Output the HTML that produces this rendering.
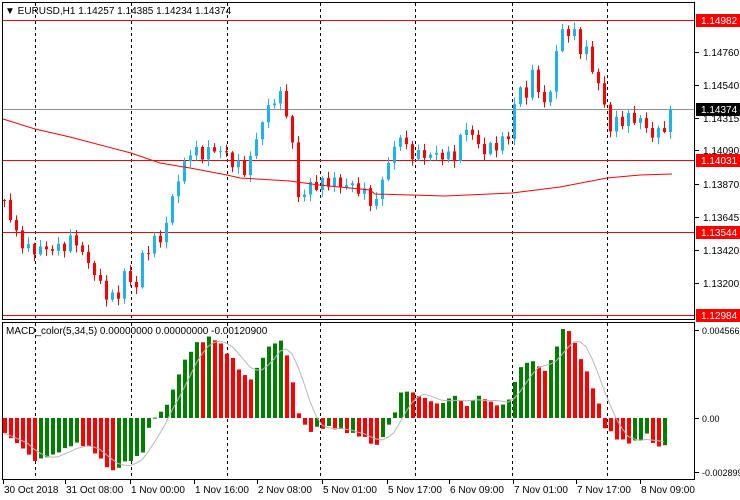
<!DOCTYPE html>
<html><head><meta charset="utf-8"><style>
html,body{margin:0;padding:0;background:#fff;width:740px;height:500px;overflow:hidden}
svg{display:block}
text{font-family:"Liberation Sans",Tahoma,sans-serif;font-size:10px;fill:#000}
</style></head><body>
<svg id="s" width="740" height="500" xmlns="http://www.w3.org/2000/svg">
<rect x="0" y="0" width="740" height="500" fill="#fff"/>
<g id="g"></g>
<rect x="2.5" y="2.5" width="692" height="317" fill="none" stroke="#000"/>
<rect x="2.5" y="322.5" width="692" height="157" fill="none" stroke="#000"/>
<text x="5" y="14" style="font-size:10px">▼ EURUSD,H1  1.14257 1.14385 1.14234 1.14374</text>
<text x="6" y="334" style="font-size:10px">MACD_color(5,34,5) 0.00000000 0.00000000 -0.00120900</text>
</svg>
<script>
var g=document.getElementById('g'),h='';
function L(x1,y1,x2,y2,c,extra){h+='<line x1="'+x1+'" y1="'+y1+'" x2="'+x2+'" y2="'+y2+'" stroke="'+c+'" '+(extra||'')+'/>';}
function R(x,y,w,hh,c){h+='<rect x="'+x+'" y="'+y+'" width="'+w+'" height="'+hh+'" fill="'+c+'"/>';}
function T(x,y,t,c,extra){h+='<text x="'+x+'" y="'+y+'" '+(extra||'')+' style="fill:'+c+'">'+t+'</text>';}
var vx=[35,131,227,320,415,512,607];
vx.forEach(function(x){L(x+.5,3,x+.5,319,'#000','stroke-dasharray="3,3"');L(x+.5,323,x+.5,479,'#000','stroke-dasharray="3,3"');});
[20,160,232,315].forEach(function(y){L(3,y+.5,694,y+.5,'#f00');});
L(3,109.5,694,109.5,'#8a949c');
function interp(p,x){for(var k=0;k<p.length-1;k++){if(x>=p[k][0]&&x<=p[k+1][0]){var t=(x-p[k][0])/(p[k+1][0]-p[k][0]);return p[k][1]+t*(p[k+1][1]-p[k][1]);}}return x<p[0][0]?p[0][1]:p[p.length-1][1];}
var kp=[[4,200],[16,235],[28,250],[60,248],[75,238],[82,255],[90,265],[100,285],[110,300],[120,292],[125,270],[135,292],[140,260],[150,245],[165,233],[170,200],[180,175],[190,150],[200,155],[210,150],[220,150],[235,165],[245,170],[250,160],[258,130],[265,115],[272,100],[278,95],[283,100],[290,125],[296,190],[300,200],[310,185],[320,185],[330,180],[340,185],[350,185],[360,190],[370,200],[378,205],[383,170],[390,160],[400,133],[406,150],[415,155],[445,155],[452,160],[460,140],[465,125],[475,140],[480,150],[488,150],[495,145],[505,140],[512,130],[517,68],[523,110],[530,72],[535,80],[540,90],[545,112],[550,88],[555,58],[560,30],[565,31],[570,33],[575,35],[580,48],[585,50],[590,60],[595,80],[600,88],[605,110],[610,128],[616,122],[622,120],[630,118],[640,120],[645,128],[650,132],[655,138],[660,130],[665,125],[671,109]];
var prev=200;
for(var i=0;i<112;i++){var x=4+6*i;var c=interp(kp,x)+Math.sin(i*2.7)*6;if(i==111)c=109;var o=prev;prev=c;
var hi=Math.min(o,c)-Math.abs(Math.sin(i*1.9))*6-1,lo=Math.max(o,c)+Math.abs(Math.cos(i*1.3))*6+1;
var col=c<o?'#1cb4f0':'#ff0000';L(x+.5,hi,x+.5,lo,col);var t=Math.min(o,c),bh=Math.max(1,Math.abs(o-c));R(x-1,t,3,bh,col);}
var ma=[[3,119],[35,129],[70,137],[131,153],[160,163],[190,168],[227,175],[240,178],[290,181],[319,185],[370,190],[375,194],[445,196],[512,193],[560,187],[607,178],[640,175],[672,174]];
var pts=ma.map(function(p){return p[0]+','+p[1];}).join(' ');h+='<polyline points="'+pts+'" fill="none" stroke="#f00" stroke-width="1"/>';
[[52,'1.14760'],[85,'1.14540'],[118,'1.14315'],[150,'1.14090'],[184,'1.13870'],[217,'1.13645'],[250,'1.13420'],[283,'1.13200']].forEach(function(a){L(695,a[0]+.5,699,a[0]+.5,'#000');T(703,a[0]+4,a[1],'#000');});
[[20,'1.14982'],[160,'1.14031'],[232,'1.13544'],[315,'1.12984']].forEach(function(a){R(696,a[0]-6,44,13,'#f00');T(701,a[0]+4,a[1],'#fff');});
R(696,103,44,13,'#000');T(701,113,'1.14374','#fff');
var mk=[[4,433],[24,450],[33,461],[52,455],[75,443],[90,448],[111,472],[123,463],[141,455],[151,418],[160,413],[170,397],[179,370],[193,345],[208,338],[215,339],[231,358],[245,378],[252,378],[264,352],[278,338],[288,358],[295,403],[300,418],[307,432],[316,428],[330,427],[349,433],[363,437],[375,447],[380,440],[392,418],[401,390],[410,392],[439,405],[453,395],[467,407],[476,395],[500,407],[509,398],[519,367],[533,360],[542,373],[552,358],[561,330],[568,330],[580,358],[594,392],[599,408],[604,427],[618,440],[632,443],[646,435],[658,448],[665,443]];
var vals=[],pv=null;
for(var i=0;i<111;i++){var x=4+6*i;var v=interp(mk,x)+Math.sin(i*3.1)*1.5;vals.push(v);var col=(pv===null||v<pv)?'#008000':'#ff0000';if(i<6)col='#ff0000';pv=v;
var t=Math.min(v,418),bh=Math.abs(v-418);R(x-1,t,4,Math.max(1,bh),col);}
var sg=[];for(var i=0;i<vals.length;i++){var s=0,n=0;for(var k=Math.max(0,i-4);k<=i;k++){s+=vals[k];n++;}sg.push((4+6*i)+','+(s/n).toFixed(1));}
h+='<polyline points="'+sg.join(' ')+'" fill="none" stroke="#b8b8b8" stroke-width="1"/>';
[[330,'0.0045666'],[418,'0.00'],[472,'-0.002899']].forEach(function(a){L(695,a[0]+.5,699,a[0]+.5,'#000');T(702,a[0]+4,a[1],'#000','style="font-size:9px"');});
[[4,'30 Oct 2018'],[66,'31 Oct 08:00'],[131,'1 Nov 00:00'],[195,'1 Nov 16:00'],[258,'2 Nov 08:00'],[323,'5 Nov 01:00'],[388,'5 Nov 17:00'],[450,'6 Nov 09:00'],[514,'7 Nov 01:00'],[577,'7 Nov 17:00'],[641,'8 Nov 09:00']].forEach(function(a){L(a[0]-1+.5,480,a[0]-1+.5,484,'#000');T(a[0],493,a[1],'#000');});
g.innerHTML=h;
</script>
</body></html>
